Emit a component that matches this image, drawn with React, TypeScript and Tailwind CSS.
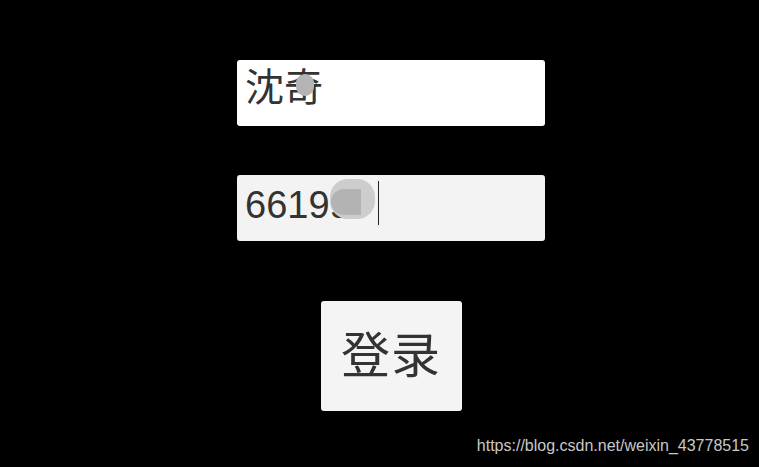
export default function App() {
  return (
    <div className="relative w-[759px] h-[467px] bg-black overflow-hidden font-['Liberation_Sans','Noto_Sans_CJK_SC',sans-serif]">
      <div className="ml-[237px] w-[308px] pt-[60px] flex flex-col items-center">
        {/* Username */}
        <div className="relative w-full h-[66px] rounded-[3px] bg-white flex items-center pl-[8px] pb-[12px]">
          <span className="text-[39px] leading-none text-[#333]">沈奇</span>
          <div className="absolute left-[59px] top-[14px] w-[18px] h-[22px] rounded-full bg-[#b4b4b4]" />
        </div>

        {/* Password */}
        <div className="relative mt-[49px] w-full h-[66px] rounded-[3px] bg-[#f3f3f3] flex items-center pl-[8px] pb-[7px]">
          <span className="text-[38px] leading-none text-[#333]">66199</span>
          <div className="absolute left-[93px] top-[4px] w-[45px] h-[40px] rounded-[18px] bg-[#cdcdcd]" />
          <div className="absolute left-[94px] top-[14px] w-[30px] h-[26px] rounded-l-full bg-[#b3b3b3]" />
          <div className="absolute left-[141px] top-[6px] w-px h-[44px] bg-[#222]" />
        </div>

        {/* Login button */}
        <div className="mt-[60px] w-[141px] h-[110px] rounded-[3px] bg-[#f4f4f4] flex items-center justify-center">
          <span className="text-[49px] leading-none text-[#333] tracking-[1px]">登录</span>
        </div>
      </div>

      <div className="absolute right-[10px] bottom-[9px] text-[16px] text-[#c8c8c8]">
        https://blog.csdn.net/weixin_43778515
      </div>
    </div>
  );
}
